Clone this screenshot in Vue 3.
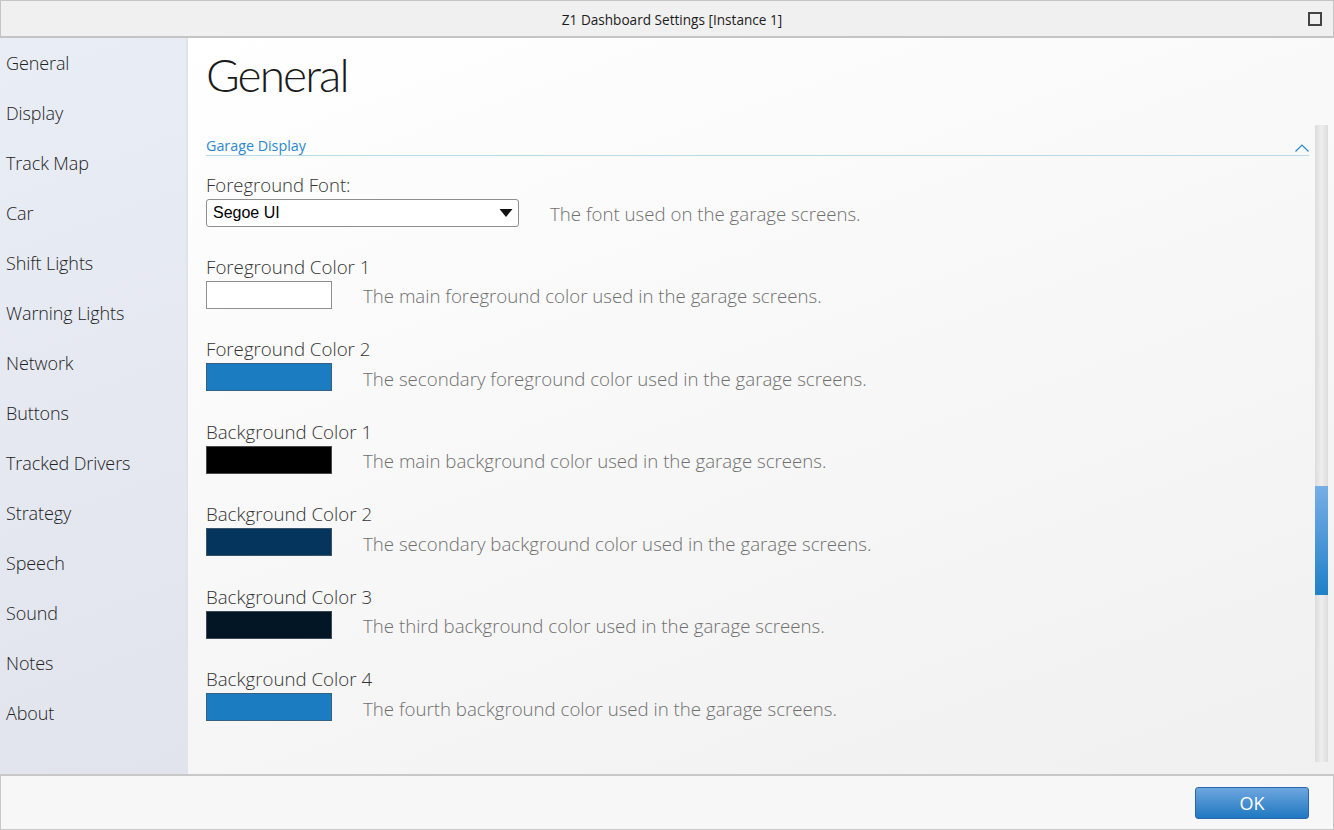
<script setup>
const navItems = [
  'General', 'Display', 'Track Map', 'Car', 'Shift Lights', 'Warning Lights', 'Network',
  'Buttons', 'Tracked Drivers', 'Strategy', 'Speech', 'Sound', 'Notes', 'About',
]

const colorRows = [
  { label: 'Foreground Color 1', color: '#ffffff', border: '#8f8f8f', text: 'The main foreground color used in the garage screens.' },
  { label: 'Foreground Color 2', color: '#1c7cc2', border: '#35617f', text: 'The secondary foreground color used in the garage screens.' },
  { label: 'Background Color 1', color: '#000000', border: '#4a4a4a', text: 'The main background color used in the garage screens.' },
  { label: 'Background Color 2', color: '#05345c', border: '#3c5468', text: 'The secondary background color used in the garage screens.' },
  { label: 'Background Color 3', color: '#021626', border: '#3c4a55', text: 'The third background color used in the garage screens.' },
  { label: 'Background Color 4', color: '#1c7cc2', border: '#35617f', text: 'The fourth background color used in the garage screens.' },
]
</script>

<template>
  <div class="window">
    <header class="title-bar">
      <span class="title-text">Z1 Dashboard Settings [Instance 1]</span>
      <span class="maximize"></span>
    </header>

    <div class="main">
      <nav class="sidebar">
        <div v-for="item in navItems" :key="item" class="nav-item">{{ item }}</div>
      </nav>

      <section class="content">
        <h1 class="page-title">General</h1>

        <div class="settings-area">
          <div class="settings">
            <div class="section-head">
              <span class="section-name">Garage Display</span>
              <svg class="chevron" width="14" height="8" viewBox="0 0 14 8">
                <path d="M0.5 7.5 L7 1 L13.5 7.5" fill="none" stroke="#2b88cf" stroke-width="1.2" />
              </svg>
            </div>

            <div class="setting font-setting">
              <div class="setting-label">Foreground Font:</div>
              <div class="setting-line">
                <div class="select">
                  <span>Segoe UI</span>
                  <svg width="14" height="8" viewBox="0 0 14 8"><path d="M0.5 0 H13.5 L7 8 Z" fill="#111" /></svg>
                </div>
                <span class="desc">The font used on the garage screens.</span>
              </div>
            </div>

            <div v-for="row in colorRows" :key="row.label" class="setting color-setting">
              <div class="setting-label">{{ row.label }}</div>
              <div class="setting-line">
                <span class="swatch" :style="{ background: row.color, borderColor: row.border }"></span>
                <span class="desc">{{ row.text }}</span>
              </div>
            </div>
          </div>

          <div class="scrollbar">
            <div class="thumb"></div>
          </div>
        </div>
      </section>
    </div>

    <footer class="footer">
      <button class="ok-button">OK</button>
    </footer>
  </div>
</template>

<style scoped>
.window {
  width: 1334px;
  height: 830px;
  display: flex;
  flex-direction: column;
  box-sizing: border-box;
  overflow: hidden;
  font-family: "Open Sans", "Noto Sans", sans-serif;
  font-weight: 300;
  color: #222;
}

.title-bar {
  height: 38px;
  flex: none;
  box-sizing: border-box;
  display: flex;
  align-items: center;
  justify-content: center;
  position: relative;
  padding: 2px 0 0 10px;
  background: #f0f0f0;
  border: 1px solid #c4c4c4;
  border-bottom-width: 2px;
}

.title-text {
  font-family: "Open Sans", sans-serif;
  font-weight: 400;
  font-size: 13.6px;
  color: #1c1c1c;
}

.maximize {
  position: absolute;
  right: 11px;
  top: 11px;
  width: 14px;
  height: 14px;
  box-sizing: border-box;
  border: 2px solid #444;
}

.main {
  flex: 1;
  min-height: 0;
  display: flex;
}

.sidebar {
  width: 188px;
  flex: none;
  box-sizing: border-box;
  background: linear-gradient(160deg, #e9edf6 0%, #e1e4ed 100%);
  border-right: 2px solid #dfe3ec;
}

.nav-item {
  height: 50px;
  display: flex;
  align-items: center;
  padding-left: 6px;
  font-size: 18px;
  letter-spacing: -0.1px;
}

.content {
  flex: 1;
  min-width: 0;
  display: flex;
  flex-direction: column;
  background: linear-gradient(160deg, #ffffff 0%, #f0f0f0 100%);
  padding-left: 18px;
}

.page-title {
  margin: 0;
  height: 87px;
  flex: none;
  font-family: "Lato", "Open Sans", sans-serif;
  font-size: 46px;
  font-weight: 300;
  line-height: 73px;
  letter-spacing: -1.9px;
  color: #1a1a1a;
}

.settings-area {
  flex: 1;
  min-height: 0;
  display: flex;
  padding-bottom: 12px;
}

.settings {
  width: 1103px;
  flex: none;
}

.section-head {
  height: 31px;
  box-sizing: border-box;
  display: flex;
  align-items: flex-end;
  justify-content: space-between;
  border-bottom: 1px solid #bcd6ea;
}

.section-name {
  font-size: 14.3px;
  font-weight: 400;
  color: #2b88cf;
  line-height: 18px;
}

.chevron {
  margin-bottom: 3px;
}

.setting-label {
  font-size: 18.7px;
  line-height: 24px;
  color: #333;
  height: 26px;
}

.font-setting {
  margin-top: 17px;
}

.color-setting {
  margin-top: 28.5px;
}

.font-setting + .color-setting {
  margin-top: 27.75px;
}

.font-setting .setting-label {
  font-size: 18.5px;
}

.setting-line {
  display: flex;
  align-items: center;
  height: 28px;
}

.select {
  width: 313px;
  height: 28px;
  box-sizing: border-box;
  flex: none;
  display: flex;
  align-items: center;
  justify-content: space-between;
  padding: 0 5px 0 6px;
  background: #fff;
  border: 1px solid #8e8e8e;
  border-radius: 3px;
  font-family: "Liberation Sans", sans-serif;
  font-weight: 400;
  font-size: 16px;
  color: #000;
}

.select + .desc {
  margin-left: 31px;
}

.swatch {
  width: 126px;
  height: 28px;
  box-sizing: border-box;
  flex: none;
  border: 1px solid;
}

.swatch + .desc {
  margin-left: 31px;
  padding-top: 2px;
}

.desc {
  font-size: 18.67px;
  color: #6f6f6f;
  white-space: nowrap;
}

.scrollbar {
  width: 13px;
  flex: none;
  margin-left: 6px;
  background: linear-gradient(90deg, #dcdcdc 0%, #eeeeee 50%, #dcdcdc 100%);
  position: relative;
}

.thumb {
  position: absolute;
  left: 0;
  right: 0;
  top: 361px;
  height: 109px;
  background: linear-gradient(180deg, #76aee6 0%, #2080c8 100%);
}

.footer {
  height: 56px;
  flex: none;
  box-sizing: border-box;
  display: flex;
  align-items: center;
  justify-content: flex-end;
  padding-right: 24px;
  background: #f7f7f7;
  border: 1px solid #c8c8c8;
  border-top-width: 2px;
}

.ok-button {
  width: 114px;
  height: 32px;
  padding: 0;
  border: 1px solid #2a66ad;
  border-radius: 3px;
  background: linear-gradient(180deg, #6ea6df 0%, #1f78c1 100%);
  color: #fff;
  font-family: "Open Sans", sans-serif;
  font-size: 18px;
  font-weight: 400;
}
</style>

<style>
html, body {
  margin: 0;
  background: #f0f0f0;
}
</style>
